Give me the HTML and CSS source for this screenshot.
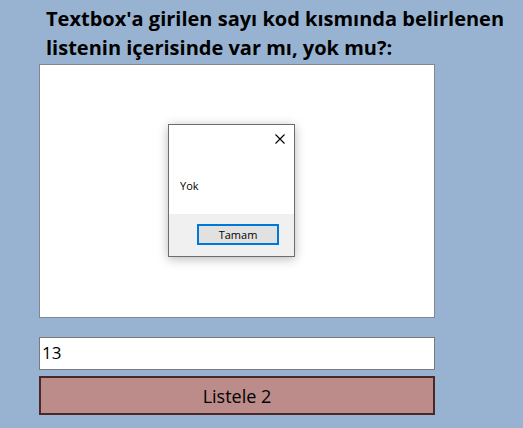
FILE: index.html
```html
<!DOCTYPE html>
<html lang="tr">
<head>
<meta charset="utf-8">
<title>Liste kontrol</title>
<link rel="stylesheet" href="styles.css">
</head>
<body>
<main class="page">
  <h1 class="title">Textbox'a girilen sayı kod kısmında belirlenen listenin içerisinde var mı, yok mu?:</h1>
  <div class="listbox">
    <div class="dialog" role="dialog">
      <div class="dialog-body">
        <div class="dialog-close" aria-label="Kapat">
          <svg width="10" height="10" viewBox="0 0 10 10"><path d="M0.5 0.5 L9.5 9.5 M9.5 0.5 L0.5 9.5" stroke="#000" stroke-width="1.1" fill="none"/></svg>
        </div>
        <p class="dialog-text">Yok</p>
      </div>
      <div class="dialog-footer">
        <button class="dialog-btn">Tamam</button>
      </div>
    </div>
  </div>
  <input class="textbox" type="text" value="13">
  <button class="list-btn">Listele 2</button>
</main>
</body>
</html>
```
FILE: styles.css
```css
html, body {
  margin: 0;
  padding: 0;
  background: #98b3d1;
  height: 100%;
}
.page {
  width: 396px;
  margin-left: 39px;
  display: flex;
  flex-direction: column;
  font-family: "Open Sans", "Noto Sans", sans-serif;
}
.title {
  margin: 0 0 0 7px;
  padding-top: 4px;
  font-size: 20px;
  line-height: 29px;
  font-weight: 700;
  color: #000;
  width: 460px;
  height: 64px;
  box-sizing: border-box;
}
.listbox {
  position: relative;
  height: 254px;
  box-sizing: border-box;
  border: 1px solid #828790;
  background: #fff;
}
.dialog {
  position: absolute;
  left: 128px;
  top: 59px;
  width: 127px;
  height: 133px;
  box-sizing: border-box;
  border: 1px solid #6d6d6d;
  background: #fff;
  box-shadow: 0 2px 10px rgba(0, 0, 0, 0.28);
  display: flex;
  flex-direction: column;
}
.dialog-body {
  position: relative;
  flex: 1;
}
.dialog-close {
  position: absolute;
  right: 9px;
  top: 9px;
  width: 10px;
  height: 10px;
  line-height: 0;
}
.dialog-text {
  margin: 0;
  padding: 54px 0 0 11px;
  font-size: 11px;
  line-height: 14px;
  color: #000;
}
.dialog-footer {
  height: 42px;
  background: #f0f0f0;
  display: flex;
  justify-content: flex-end;
  padding: 10px 15px 0 0;
  box-sizing: border-box;
}
.dialog-btn {
  width: 82px;
  height: 21px;
  box-sizing: border-box;
  border: 2px solid #0078d7;
  background: #e1e1e1;
  font-family: "Open Sans", "Noto Sans", sans-serif;
  font-size: 11px;
  line-height: 15px;
  padding: 0;
  color: #000;
}
.textbox {
  margin-top: 19px;
  height: 33px;
  box-sizing: border-box;
  border: 1px solid #7a7a7a;
  background: #fff;
  padding: 0 0 2px 2px;
  font-family: "Open Sans", "Noto Sans", sans-serif;
  font-size: 17px;
  color: #000;
  outline: none;
}
.list-btn {
  margin-top: 6px;
  height: 39px;
  box-sizing: border-box;
  border: 2px solid #4a2828;
  background: #bc8c8a;
  font-family: "Open Sans", "Noto Sans", sans-serif;
  font-size: 18px;
  color: #000;
  padding: 0;
}
```
